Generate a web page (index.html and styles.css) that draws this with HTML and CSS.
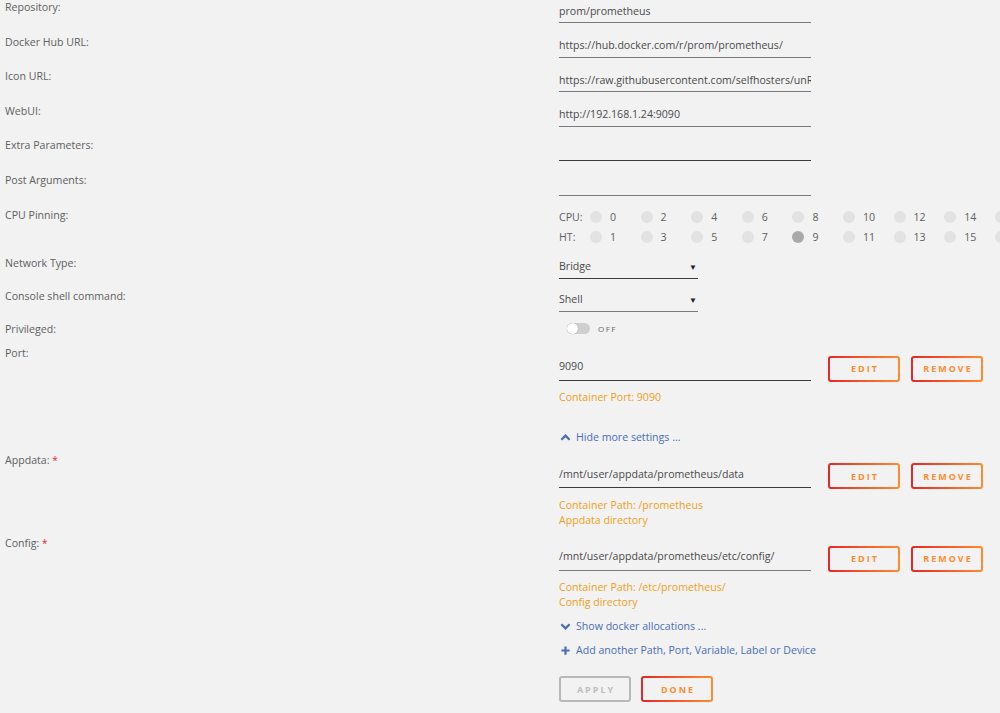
FILE: index.html
```html
<!DOCTYPE html>
<html lang="en">
<head>
    <meta charset="UTF-8">
    <meta name="viewport" content="width=device-width, initial-scale=1.0">
    <title>Update Container</title>
    <link rel="stylesheet" href="styles.css">
</head>
<body>
    <div class="form">
        <div class="row">
            <div class="label">Repository:</div>
            <div class="value"><input class="field" type="text" value="prom/prometheus"></div>
        </div>
        <div class="row">
            <div class="label">Docker Hub URL:</div>
            <div class="value"><input class="field" type="text" value="https://hub.docker.com/r/prom/prometheus/"></div>
        </div>
        <div class="row">
            <div class="label">Icon URL:</div>
            <div class="value"><input class="field" type="text" value="https://raw.githubusercontent.com/selfhosters/unRAID-CA-templates/master/templates/img/prometheus.png"></div>
        </div>
        <div class="row">
            <div class="label">WebUI:</div>
            <div class="value"><input class="field" type="text" value="http://192.168.1.24:9090"></div>
        </div>
        <div class="row">
            <div class="label">Extra Parameters:</div>
            <div class="value"><input class="field dark" type="text" value=""></div>
        </div>
        <div class="row">
            <div class="label">Post Arguments:</div>
            <div class="value"><input class="field" type="text" value=""></div>
        </div>

        <div class="row cpu-row">
            <div class="label">CPU Pinning:</div>
            <div class="value">
                <div class="cpu-line" id="cpuLine"><span class="cpu-tag">CPU:</span></div>
                <div class="cpu-line" id="htLine"><span class="cpu-tag">HT:</span></div>
            </div>
        </div>

        <div class="row select-row">
            <div class="label">Network Type:</div>
            <div class="value"><div class="select dark"><span>Bridge</span><span class="arrow">&#9660;</span></div></div>
        </div>
        <div class="row select-row">
            <div class="label">Console shell command:</div>
            <div class="value"><div class="select"><span>Shell</span><span class="arrow">&#9660;</span></div></div>
        </div>
        <div class="row switch-row">
            <div class="label">Privileged:</div>
            <div class="value">
                <div class="switch"><span class="track"><span class="knob"></span></span><span class="switch-text">OFF</span></div>
            </div>
        </div>

        <div class="row path-row">
            <div class="label">Port:</div>
            <div class="value">
                <div class="field-line">
                    <input class="field tall dark" type="text" value="9090">
                    <button class="btn">Edit</button>
                    <button class="btn">Remove</button>
                </div>
                <div class="help">Container Port: 9090</div>
            </div>
        </div>

        <div class="row link-row first-link">
            <div class="label"></div>
            <div class="value">
                <a class="toggle-link" href="#">
                    <svg width="11" height="11" viewBox="0 0 12 12"><path d="M1.5 8.5 L6 4 L10.5 8.5" fill="none" stroke="currentColor" stroke-width="2.4"/></svg>
                    Hide more settings ...
                </a>
            </div>
        </div>

        <div class="row path-row">
            <div class="label">Appdata: <span class="req">*</span></div>
            <div class="value">
                <div class="field-line">
                    <input class="field tall dark" type="text" value="/mnt/user/appdata/prometheus/data">
                    <button class="btn">Edit</button>
                    <button class="btn">Remove</button>
                </div>
                <div class="help">Container Path: /prometheus<br>Appdata directory</div>
            </div>
        </div>

        <div class="row path-row">
            <div class="label">Config: <span class="req">*</span></div>
            <div class="value">
                <div class="field-line">
                    <input class="field tall" type="text" value="/mnt/user/appdata/prometheus/etc/config/">
                    <button class="btn">Edit</button>
                    <button class="btn">Remove</button>
                </div>
                <div class="help">Container Path: /etc/prometheus/<br>Config directory</div>
            </div>
        </div>

        <div class="row link-row">
            <div class="label"></div>
            <div class="value">
                <a class="toggle-link" href="#">
                    <svg width="11" height="11" viewBox="0 0 12 12"><path d="M1.5 3.5 L6 8 L10.5 3.5" fill="none" stroke="currentColor" stroke-width="2.4"/></svg>
                    Show docker allocations ...
                </a>
            </div>
        </div>
        <div class="row link-row">
            <div class="label"></div>
            <div class="value">
                <a class="toggle-link" href="#">
                    <svg width="11" height="11" viewBox="0 0 12 12"><path d="M6 1.5 V10.5 M1.5 6 H10.5" fill="none" stroke="currentColor" stroke-width="2.4"/></svg>
                    Add another Path, Port, Variable, Label or Device
                </a>
            </div>
        </div>

        <div class="row actions-row">
            <div class="label"></div>
            <div class="value actions">
                <button class="btn disabled">Apply</button>
                <button class="btn">Done</button>
            </div>
        </div>
    </div>

    <script>
        // Build the CPU / HT pinning checkboxes (last pair falls off the screen edge)
        const cpuLine = document.getElementById('cpuLine');
        const htLine = document.getElementById('htLine');
        const pinned = [9];

        for (let i = 0; i < 16; i += 2) {
            cpuLine.innerHTML += `<span class="cpu"><span class="dot"></span>${i}</span>`;
            const ht = i + 1;
            const cls = pinned.includes(ht) ? 'dot on' : 'dot';
            htLine.innerHTML += `<span class="cpu"><span class="${cls}"></span>${ht}</span>`;
        }
        cpuLine.innerHTML += `<span class="cpu"><span class="dot"></span></span>`;
        htLine.innerHTML += `<span class="cpu"><span class="dot"></span></span>`;
    </script>
</body>
</html>
```

FILE: styles.css
```css
html, body {
    overflow: hidden;
}
body {
    margin: 0;
    background: #f2f2f2;
    font-family: 'Open Sans', sans-serif;
    font-size: 10.6px;
    color: #606060;
}
.form {
    width: 1000px;
}
.row {
    display: flex;
    min-height: 34.6px;
}
.label {
    width: 554px;
    flex: none;
    padding-left: 5px;
    line-height: 14px;
}
.value {
    flex: 1;
    min-width: 0;
}
.req {
    color: #e22828;
    font-size: 10px;
    vertical-align: top;
}

/* text inputs */
.field {
    display: block;
    width: 252px;
    height: 23px;
    box-sizing: border-box;
    padding: 3px 0 4px;
    margin: 0;
    border: none;
    border-bottom: 1px solid #7a7a7a;
    background: transparent;
    font: inherit;
    line-height: 15px;
    color: #4a4a4a;
    outline: none;
}
.field.dark {
    border-bottom-color: #3a3a3a;
}
.field.tall {
    height: 25px;
    padding-bottom: 6px;
}

/* cpu pinning */
.cpu-row {
    height: 48.4px;
}
.cpu-line {
    display: flex;
    white-space: nowrap;
    line-height: 20px;
    height: 20px;
}
.cpu-line:first-child {
    margin-top: -1px;
}
.cpu-tag {
    width: 31px;
    flex: none;
}
.cpu {
    display: flex;
    align-items: center;
    width: 50.6px;
    flex: none;
}
.dot {
    width: 12px;
    height: 12px;
    border-radius: 50%;
    background: #e2e2e2;
    margin-right: 8px;
}
.dot.on {
    background: #a9a9a9;
}

/* selects */
.select-row {
    min-height: 33px;
}
.select {
    display: flex;
    justify-content: space-between;
    width: 139px;
    height: 23px;
    box-sizing: border-box;
    padding-top: 3px;
    line-height: 15px;
    border-bottom: 1px solid #7a7a7a;
    color: #4a4a4a;
}
.select.dark {
    border-bottom-color: #3a3a3a;
}
.arrow {
    font-size: 8px;
    color: #222;
    padding-right: 1px;
}

/* switch */
.switch-row {
    min-height: 24px;
}
.switch {
    display: flex;
    align-items: center;
    margin-left: 8px;
    height: 14px;
}
.track {
    position: relative;
    width: 23px;
    height: 11px;
    border-radius: 6px;
    background: #cfcfcf;
    margin-right: 8px;
}
.knob {
    position: absolute;
    left: 0;
    top: 0;
    width: 11px;
    height: 11px;
    border-radius: 50%;
    background: #fff;
    box-shadow: 0 0 1px rgba(0, 0, 0, 0.4);
}
.switch-text {
    font-size: 8px;
    letter-spacing: 1.5px;
    color: #666;
}

/* port / path rows */
.path-row {
    margin-bottom: 8px;
}
.path-row .value {
    padding-top: 10px;
}
.field-line {
    display: flex;
    align-items: flex-start;
}
.field-line .btn {
    margin-left: 17px;
}
.field-line .btn + .btn {
    margin-left: 11px;
}
.help {
    margin-top: 8.5px;
    line-height: 15px;
    color: #f0a020;
}

.btn {
    width: 72px;
    height: 26px;
    box-sizing: border-box;
    border: 2px solid transparent;
    border-radius: 3px;
    background: linear-gradient(#f2f2f2, #f2f2f2) padding-box,
                linear-gradient(90deg, #e22828, #ff8c2f) border-box;
    color: #ff8c2f;
    font-family: 'Open Sans', sans-serif;
    font-size: 9px;
    font-weight: bold;
    letter-spacing: 2px;
    text-transform: uppercase;
    padding: 0 0 0 2px;
    cursor: pointer;
}
.btn.disabled {
    background: #f2f2f2;
    border-color: #b8b8b8;
    color: #bdbdbd;
    cursor: default;
}

/* links */
.link-row {
    min-height: 24px;
}
.first-link {
    padding-top: 16px;
    min-height: 24px;
}
.toggle-link {
    display: inline-flex;
    align-items: center;
    line-height: 16px;
    color: #486dba;
    text-decoration: none;
}
.toggle-link svg {
    margin: 0 5px 0 1px;
}
.actions-row {
    padding-top: 10px;
}
.actions {
    display: flex;
    gap: 10px;
}
```
